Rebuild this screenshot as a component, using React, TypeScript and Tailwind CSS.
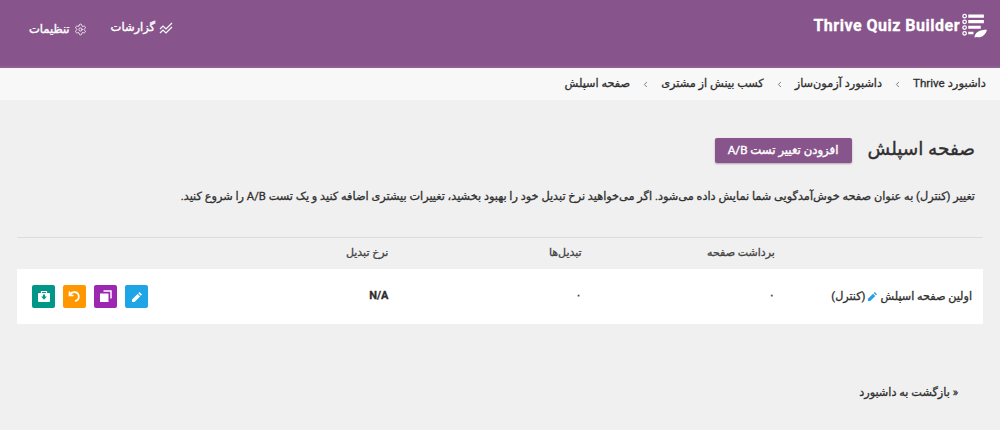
import { ChevronLeft, Settings } from "lucide-react";

const crumbs = ["داشبورد Thrive", "داشبورد آزمون‌ساز", "کسب بینش از مشتری", "صفحه اسپلش"];

function Logo() {
  return (
    <svg width="25" height="25" viewBox="0 0 24 24" fill="none" className="shrink-0">
      <circle cx="2.500" cy="3" r="1.700" stroke="white" strokeWidth="1.200" />
      <circle cx="2.500" cy="8.500" r="1.700" stroke="white" strokeWidth="1.200" />
      <circle cx="2.500" cy="14" r="1.700" stroke="white" strokeWidth="1.200" />
      <circle cx="2.500" cy="19.500" r="1.700" stroke="white" strokeWidth="1.200" />
      <path d="M6 1.500h15v3H6zM6 6.800h15v3H6zM6 12.200h12v3H6zM6 18h5v2.500H6z" fill="white" />
      <path d="M12 23.500c0-5 5-7.500 12-7.500-1.500 5.500-5.500 8-10 7z" fill="white" />
    </svg>
  );
}

function ChartIcon() {
  return (
    <svg width="14" height="12" viewBox="0 0 14 12" fill="none" stroke="white" strokeWidth="1.200" className="shrink-0">
      <path d="M1 7l3-3 3 3 6-6" />
      <path d="M1 11l3-3 3 3 6-6" />
    </svg>
  );
}

function PencilIcon({ color, size }: { color: string; size: number }) {
  return (
    <svg width={size} height={size} viewBox="0 0 12 12" fill={color}>
      <path d="M8.500 1l2.500 2.500-1.200 1.200-2.500-2.500zM6.600 2.900l2.500 2.500L3.500 11H1V8.500z" />
    </svg>
  );
}

export default function App() {
  return (
    <div dir="rtl" className="min-h-[430px] bg-[#f0f0f0] font-['Roboto','DejaVu_Sans',sans-serif] text-[#2f2f2f] overflow-hidden [-webkit-text-stroke:0.3px]">
      {/* top bar */}
      <div className="h-[68px] bg-[#87548b] border-b-2 border-[#8f5f93] flex items-start justify-between text-white">
        <div dir="ltr" className="flex items-center gap-[2px] mt-[13px] mr-[13px]">
          <span className="text-[16px] font-bold tracking-[0.5px]">Thrive Quiz Builder</span>
          <Logo />
        </div>
        <div className="flex items-start ml-[29px] mt-[19px] text-[11.500px] [-webkit-text-stroke:0.4px]">
          <span className="flex items-center gap-1">
            <ChartIcon />
            گزارشات
          </span>
          <span className="flex items-center gap-1 mr-[24px] mt-[2px]">
            <Settings size={13} strokeWidth={1.500} />
            تنظیمات
          </span>
        </div>
      </div>

      {/* breadcrumb */}
      <div className="h-[32px] bg-[#f8f8f8] flex items-center pr-[14px] text-[11.300px]">
        {crumbs.map((c, i) => (
          <span key={c} className={i === 0 ? "flex items-center text-[11.600px]" : "flex items-center"}>
            {i > 0 && <ChevronLeft size={9} strokeWidth={2} className="mx-[11px] text-[#555]" />}
            {c}
          </span>
        ))}
      </div>

      {/* title */}
      <div className="flex items-start gap-[16px] mt-[38px] pr-[25px]">
        <h1 className="text-[18.500px] leading-[22px] [-webkit-text-stroke:0.35px]">صفحه اسپلش</h1>
        <button className="h-[25px] w-[137px] bg-[#87548b] text-white text-[11.700px] rounded-[2px] shadow-[0_1px_2px_rgba(0,0,0,0.3)] [-webkit-text-stroke:0.4px]">
          افزودن تغییر تست A/B
        </button>
      </div>

      <p className="mt-[26px] pr-[25px] text-[11.300px] leading-[16px]">
        تغییر (کنترل) به عنوان صفحه خوش‌آمدگویی شما نمایش داده می‌شود. اگر می‌خواهید نرخ تبدیل خود را بهبود بخشید، تغییرات بیشتری اضافه کنید و یک تست A/B را شروع کنید.
      </p>

      {/* table */}
      <div className="mx-[17px] mt-[32px] border-t border-[#dcdcdc]">
        <div className="grid grid-cols-5 h-[31px] items-center text-[11px] text-[#444]">
          <span />
          <span className="px-[15px]">برداشت صفحه</span>
          <span className="px-[15px]">تبدیل‌ها</span>
          <span className="px-[15px]">نرخ تبدیل</span>
          <span />
        </div>
        <div className="grid grid-cols-5 h-[55px] items-center bg-white text-[11.200px]">
          <span className="pr-[11px] mt-[1px] flex items-center gap-[2px] whitespace-nowrap">
            اولین صفحه اسپلش
            <PencilIcon color="#2b9fe0" size={11} />
            (کنترل)
          </span>
          <span className="px-[15px]">۰</span>
          <span className="px-[15px]">۰</span>
          <span className="px-[15px] font-bold text-[11px]">N/A</span>
          <div className="flex justify-end gap-[8px] pl-[15px]">
            <span className="w-[23px] h-[23px] rounded-[2px] bg-[#1fa5e6] flex items-center justify-center">
              <PencilIcon color="white" size={12} />
            </span>
            <span className="w-[23px] h-[23px] rounded-[2px] bg-[#9c27b0] flex items-center justify-center">
              <svg width="13" height="13" viewBox="0 0 13 13" fill="none">
                <path d="M4.500 1h7.500v7.500" stroke="white" strokeWidth="1.500" />
                <rect x="1" y="3.500" width="8.500" height="8.500" fill="white" />
              </svg>
            </span>
            <span className="w-[23px] h-[23px] rounded-[2px] bg-[#ff9800] flex items-center justify-center">
              <svg width="13" height="13" viewBox="0 0 13 13" fill="none" stroke="white" strokeWidth="1.700">
                <path d="M1.500 1.500v4h4" />
                <path d="M2 5.200A4.500 4.500 0 1 1 7 11" />
              </svg>
            </span>
            <span className="w-[23px] h-[23px] rounded-[2px] bg-[#009688] flex items-center justify-center">
              <svg width="14" height="13" viewBox="0 0 14 13" fill="none">
                <path d="M4.500 3V1.500h5V3" stroke="white" strokeWidth="1.200" />
                <rect x="1" y="3" width="12" height="9" rx="1" fill="white" />
                <path d="M6 4.500h2v2h1.800L7 9.800 4.200 6.500H6z" fill="#009688" />
              </svg>
            </span>
          </div>
        </div>
      </div>

      <div className="mt-[61px] pr-[42px] text-[11.300px]">« بازگشت به داشبورد</div>
    </div>
  );
}
